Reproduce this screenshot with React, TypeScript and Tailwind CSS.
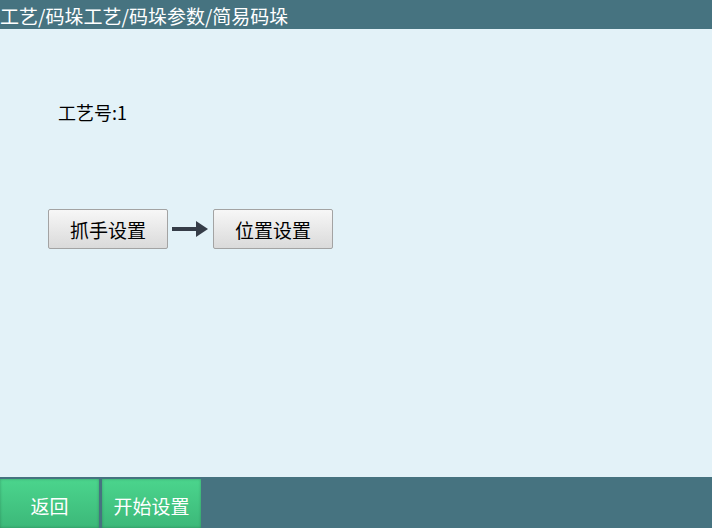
const FONT = { fontFamily: '"Microsoft YaHei", "Noto Sans CJK SC", "Liberation Sans", sans-serif' };

function ToolButton({ label }: { label: string }) {
  return (
    <button className="w-[120px] h-[40px] rounded-[2px] border border-[#a3a3a3] bg-gradient-to-b from-[#f7f7f7] to-[#dadada] text-[19px] text-black leading-none">
      {label}
    </button>
  );
}

function FooterButton({ label }: { label: string }) {
  return (
    <button className="w-[99px] h-full pt-[3px] bg-gradient-to-b from-[#4bd58d] to-[#3cb879] shadow-[inset_0_0_3px_rgba(0,0,0,0.25)] text-[19px] text-white leading-none">
      {label}
    </button>
  );
}

export default function App() {
  return (
    <div className="w-[712px] h-[528px] flex flex-col bg-[#e3f2f8]" style={FONT}>
      <div className="h-[29px] bg-[#467380] text-white text-[19px] leading-[29px] pt-[1px] overflow-hidden whitespace-nowrap">
        工艺/码垛工艺/码垛参数/简易码垛
      </div>
      <div className="flex-1 flex flex-col">
        <div className="pl-[58px] pt-[71px] text-[18px] text-black leading-[24px]">工艺号:1</div>
        <div className="flex items-center pl-[48px] mt-[85px]">
          <ToolButton label="抓手设置" />
          <svg width="45" height="20" viewBox="0 0 45 20" className="shrink-0">
            <rect x="4" y="8" width="26" height="4" fill="#363d48" />
            <polygon points="28,2 40,10 28,18" fill="#363d48" />
          </svg>
          <ToolButton label="位置设置" />
        </div>
      </div>
      <div className="h-[51px] bg-[#467380] flex gap-[3px] pt-[2px]">
        <FooterButton label="返回" />
        <FooterButton label="开始设置" />
      </div>
    </div>
  );
}
